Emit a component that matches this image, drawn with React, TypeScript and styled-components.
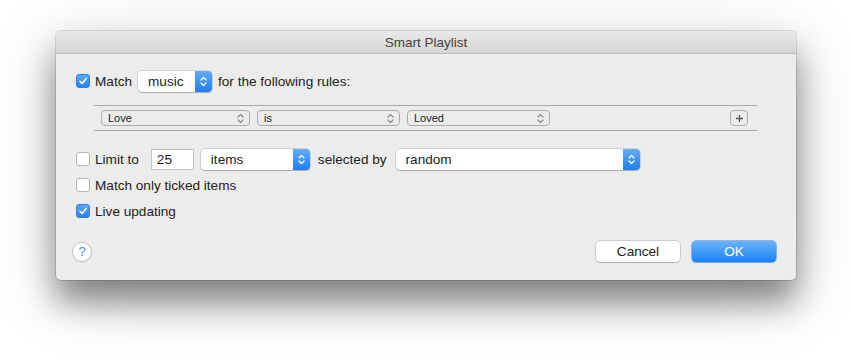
import styled, { createGlobalStyle } from "styled-components";

const Global = createGlobalStyle`
  html, body {
    margin: 0;
    background: #ffffff;
    font-family: "Liberation Sans", Arial, sans-serif;
  }
`;

const Page = styled.div`
  width: 852px;
  height: 361px;
  padding: 31px 0 0 56px;
  box-sizing: border-box;
  overflow: hidden;
`;

const Window = styled.div`
  width: 740px;
  height: 249px;
  background: #ececec;
  border-radius: 5px;
  box-shadow: 0 0 0 1px rgba(0, 0, 0, 0.12), 0 22px 32px rgba(0, 0, 0, 0.42),
    0 14px 70px rgba(0, 0, 0, 0.18);
  display: flex;
  flex-direction: column;
  overflow: hidden;
`;

const TitleBar = styled.div`
  height: 22px;
  background: linear-gradient(#e9e9e9, #d5d5d5);
  border-bottom: 1px solid #bdbdbd;
  display: flex;
  align-items: center;
  justify-content: center;
  font-size: 13.5px;
  color: #3f3f3f;
`;

const Body = styled.div`
  flex: 1;
  display: flex;
  flex-direction: column;
  padding: 16px 20px 18px 20px;
`;

const Row = styled.div<{ $mt?: number }>`
  display: flex;
  align-items: center;
  height: 22px;
  margin-top: ${(p) => p.$mt ?? 0}px;
  font-size: 13.6px;
  color: #222;
`;

const Label = styled.span<{ $ml?: number }>`
  margin-left: ${(p) => p.$ml ?? 0}px;
  white-space: nowrap;
`;

const Box = styled.span<{ $on?: boolean }>`
  width: 14px;
  height: 14px;
  box-sizing: border-box;
  border-radius: 3px;
  margin-right: 5px;
  display: inline-flex;
  align-items: center;
  justify-content: center;
  background: ${(p) => (p.$on ? "linear-gradient(#5aa8fa, #2f82f2)" : "#fff")};
  border: 1px solid ${(p) => (p.$on ? "#2f7de6" : "#b4b4b4")};
`;

const Check = ({ on }: { on?: boolean }) => (
  <Box $on={on}>
    {on && (
      <svg width="10" height="10" viewBox="0 0 10 10">
        <path d="M2 5.3 L4.1 7.5 L8.2 2.4" fill="none" stroke="#fff" strokeWidth="1.6" strokeLinecap="round" strokeLinejoin="round" />
      </svg>
    )}
  </Box>
);

const Popup = styled.div<{ $w: number; $ml?: number }>`
  width: ${(p) => p.$w}px;
  height: 21px;
  margin-left: ${(p) => p.$ml ?? 0}px;
  box-sizing: border-box;
  background: #fff;
  border-radius: 4px;
  box-shadow: 0 0 0 0.5px rgba(0, 0, 0, 0.22), 0 1px 1px rgba(0, 0, 0, 0.18);
  display: flex;
  align-items: center;
  overflow: hidden;
`;

const PopupText = styled.span`
  flex: 1;
  padding-left: 10px;
  color: #222;
`;

const Stepper = styled.span`
  width: 17px;
  height: 100%;
  background: linear-gradient(#62adfb, #1d7ff2);
  display: flex;
  align-items: center;
  justify-content: center;
`;

const Arrows = ({ color }: { color: string }) => (
  <svg width="7" height="11" viewBox="0 0 7 11">
    <path d="M1 4 L3.5 1.5 L6 4 M1 7 L3.5 9.5 L6 7" fill="none" stroke={color} strokeWidth="1.2" strokeLinecap="round" strokeLinejoin="round" />
  </svg>
);

const RulesBox = styled.div`
  margin: 13px 19px 0 18px;
  height: 24px;
  border-top: 1px solid #a9a9a9;
  border-bottom: 1px solid #a9a9a9;
  display: flex;
  align-items: center;
  padding: 0 9px 0 7px;
`;

const SmallPopup = styled.div<{ $w: number }>`
  width: ${(p) => p.$w}px;
  height: 16px;
  box-sizing: border-box;
  margin-right: 7px;
  border: 1px solid #ababab;
  border-radius: 4px;
  display: flex;
  align-items: center;
  padding: 0 5px 0 6px;
  font-size: 11px;
  color: #222;
  span {
    flex: 1;
  }
`;

const Spacer = styled.div`
  flex: 1;
`;

const PlusButton = styled.div`
  width: 18px;
  height: 16px;
  box-sizing: border-box;
  border: 1px solid #ababab;
  border-radius: 4px;
  display: flex;
  align-items: center;
  justify-content: center;
`;

const Field = styled.div`
  width: 43px;
  height: 21px;
  margin-left: 12px;
  box-sizing: border-box;
  background: #fff;
  border: 1px solid #c4c4c4;
  display: flex;
  align-items: center;
  padding-left: 5px;
`;

const Footer = styled.div`
  margin-top: auto;
  display: flex;
  align-items: center;
  height: 21px;
  font-size: 13.6px;
`;

const Help = styled.div`
  width: 20px;
  height: 20px;
  box-sizing: border-box;
  border-radius: 50%;
  background: #fff;
  border: 1px solid #c2c2c2;
  box-shadow: 0 1px 1px rgba(0, 0, 0, 0.08);
  margin-left: -4px;
  display: flex;
  align-items: center;
  justify-content: center;
  color: #3d8fe8;
  font-size: 13px;
`;

const Button = styled.div<{ $primary?: boolean }>`
  width: 84px;
  height: 21px;
  box-sizing: border-box;
  margin-left: 12px;
  border-radius: 4px;
  display: flex;
  align-items: center;
  justify-content: center;
  color: ${(p) => (p.$primary ? "#fff" : "#222")};
  background: ${(p) => (p.$primary ? "linear-gradient(#6cb3fa, #1a82fb)" : "#fff")};
  box-shadow: ${(p) =>
    p.$primary
      ? "0 0 0 0.5px #2a7fe0, 0 1px 1px rgba(0,0,0,0.15)"
      : "0 0 0 0.5px rgba(0,0,0,0.25), 0 1px 1px rgba(0,0,0,0.15)"};
`;

const App = () => {
  const rules = [
    { text: "Love", w: 149 },
    { text: "is", w: 143 },
    { text: "Loved", w: 143 },
  ];

  return (
    <Page>
      <Global />
      <Window>
        <TitleBar>Smart Playlist</TitleBar>
        <Body>
          <Row>
            <Check on />
            <Label>Match</Label>
            <Popup $w={74} $ml={6}>
              <PopupText>music</PopupText>
              <Stepper>
                <Arrows color="#fff" />
              </Stepper>
            </Popup>
            <Label $ml={6}>for the following rules:</Label>
          </Row>
          <RulesBox>
            {rules.map((r) => (
              <SmallPopup key={r.text} $w={r.w}>
                <span>{r.text}</span>
                <Arrows color="#8a8a8a" />
              </SmallPopup>
            ))}
            <Spacer />
            <PlusButton>
              <svg width="9" height="9" viewBox="0 0 9 9">
                <path d="M4.5 1 V8 M1 4.5 H8" stroke="#555" strokeWidth="1.3" />
              </svg>
            </PlusButton>
          </RulesBox>
          <Row $mt={17}>
            <Check />
            <Label>Limit to</Label>
            <Field>25</Field>
            <Popup $w={109} $ml={7}>
              <PopupText>items</PopupText>
              <Stepper>
                <Arrows color="#fff" />
              </Stepper>
            </Popup>
            <Label $ml={8}>selected by</Label>
            <Popup $w={244} $ml={9}>
              <PopupText>random</PopupText>
              <Stepper>
                <Arrows color="#fff" />
              </Stepper>
            </Popup>
          </Row>
          <Row $mt={4}>
            <Check />
            <Label>Match only ticked items</Label>
          </Row>
          <Row $mt={4}>
            <Check on />
            <Label>Live updating</Label>
          </Row>
          <Footer>
            <Help>?</Help>
            <Spacer />
            <Button>Cancel</Button>
            <Button $primary>OK</Button>
          </Footer>
        </Body>
      </Window>
    </Page>
  );
};

export default App;
